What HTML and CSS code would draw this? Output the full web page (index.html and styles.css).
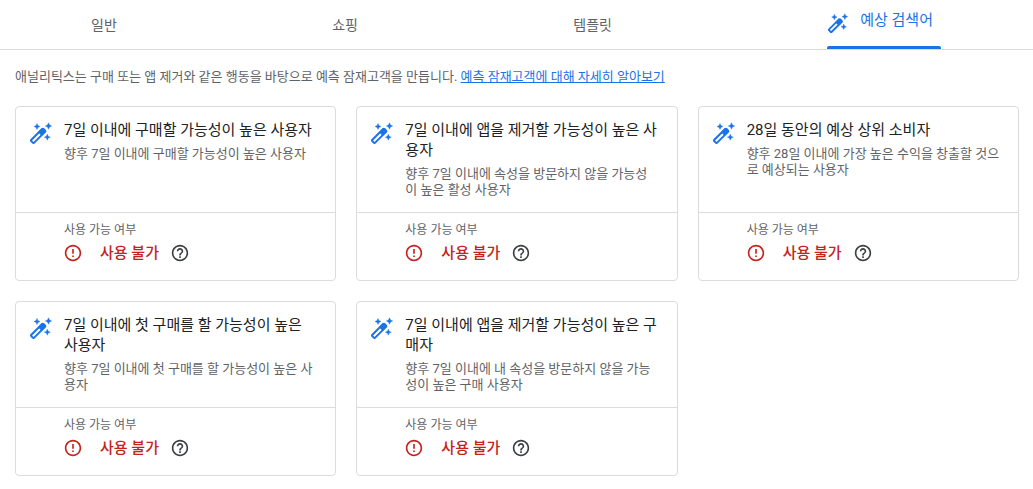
FILE: index.html
```html
<!DOCTYPE html>
<html lang="ko">
<head>
  <meta charset="utf-8" />
  <title>예상 검색어</title>
  <meta name="viewport" content="width=device-width, initial-scale=1" />
  <link rel="stylesheet" href="styles.css">
</head>
<body>
  <!-- shared icons -->
  <svg class="sprite" aria-hidden="true">
    <symbol id="wand" viewBox="0 0 22 22">
      <g transform="rotate(-45 8.300 13.700)">
        <rect x="-0.500" y="11.700" width="17.200" height="4" rx="1" fill="none" stroke="currentColor" stroke-width="2" stroke-linejoin="round" />
        <path d="M10.500 11h6v5.400h-6z" fill="currentColor" />
      </g>
      <path d="M7 1.500l.9 2.100 2.100.9-2.100.9L7 7.500l-.9-2.100-2.100-.9 2.100-.9zM18.500.8l1 2.200 2.200 1-2.200 1-1 2.200-1-2.200-2.200-1 2.200-1zM17.300 12.200l.9 2.100 2.100.9-2.100.9-.9 2.100-.9-2.100-2.100-.9 2.100-.9z" fill="currentColor" stroke="currentColor" stroke-width=".4" />
    </symbol>
    <symbol id="alert" viewBox="1 1 22 22">
      <path d="M11 15h2v2h-2zm0-8h2v6h-2zm.99-5C6.470 2 2 6.480 2 12s4.470 10 9.990 10C17.520 22 22 17.520 22 12S17.520 2 11.990 2zM12 20c-4.420 0-8-3.580-8-8s3.580-8 8-8 8 3.580 8 8-3.580 8-8 8z" fill="currentColor" />
    </symbol>
    <symbol id="help" viewBox="1 1 22 22">
      <path d="M11 18h2v-2h-2v2zm1-16C6.480 2 2 6.480 2 12s4.480 10 10 10 10-4.480 10-10S17.520 2 12 2zm0 18c-4.410 0-8-3.590-8-8s3.590-8 8-8 8 3.590 8 8-3.590 8-8 8zm0-14c-2.210 0-4 1.790-4 4h2c0-1.100.9-2 2-2s2 .9 2 2c0 2-3 1.750-3 5h2c0-2.250 3-2.500 3-5 0-2.210-1.790-4-4-4z" fill="currentColor" />
    </symbol>
  </svg>

  <nav class="tabs">
    <button class="tab" type="button">일반</button>
    <button class="tab" type="button">쇼핑</button>
    <button class="tab" type="button">템플릿</button>
    <button class="tab active" type="button">
      <svg class="tab-icon" aria-hidden="true"><use href="#wand" /></svg>
      <span class="tab-label">예상 검색어</span>
    </button>
  </nav>

  <main>
    <p class="intro">애널리틱스는 구매 또는 앱 제거와 같은 행동을 바탕으로 예측 잠재고객을 만듭니다. <a href="#">예측 잠재고객에 대해 자세히 알아보기</a></p>

    <div class="cards">
      <article class="card">
        <div class="card-body">
          <svg class="card-icon" aria-hidden="true"><use href="#wand" /></svg>
          <div class="card-text">
            <h2>7일 이내에 구매할 가능성이 높은 사용자</h2>
            <p>향후 7일 이내에 구매할 가능성이 높은 사용자</p>
          </div>
        </div>
        <div class="card-footer">
          <div class="label">사용 가능 여부</div>
          <div class="status">
            <svg class="status-icon" aria-hidden="true"><use href="#alert" /></svg>
            <span class="status-text">사용 불가</span>
            <button class="help" type="button" aria-label="도움말"><svg class="status-icon"><use href="#help" /></svg></button>
          </div>
        </div>
      </article>

      <article class="card">
        <div class="card-body">
          <svg class="card-icon" aria-hidden="true"><use href="#wand" /></svg>
          <div class="card-text">
            <h2>7일 이내에 앱을 제거할 가능성이 높은 사<br>용자</h2>
            <p>향후 7일 이내에 속성을 방문하지 않을 가능성<br>이 높은 활성 사용자</p>
          </div>
        </div>
        <div class="card-footer">
          <div class="label">사용 가능 여부</div>
          <div class="status">
            <svg class="status-icon" aria-hidden="true"><use href="#alert" /></svg>
            <span class="status-text">사용 불가</span>
            <button class="help" type="button" aria-label="도움말"><svg class="status-icon"><use href="#help" /></svg></button>
          </div>
        </div>
      </article>

      <article class="card">
        <div class="card-body">
          <svg class="card-icon" aria-hidden="true"><use href="#wand" /></svg>
          <div class="card-text">
            <h2>28일 동안의 예상 상위 소비자</h2>
            <p>향후 28일 이내에 가장 높은 수익을 창출할 것으<br>로 예상되는 사용자</p>
          </div>
        </div>
        <div class="card-footer">
          <div class="label">사용 가능 여부</div>
          <div class="status">
            <svg class="status-icon" aria-hidden="true"><use href="#alert" /></svg>
            <span class="status-text">사용 불가</span>
            <button class="help" type="button" aria-label="도움말"><svg class="status-icon"><use href="#help" /></svg></button>
          </div>
        </div>
      </article>

      <article class="card">
        <div class="card-body">
          <svg class="card-icon" aria-hidden="true"><use href="#wand" /></svg>
          <div class="card-text">
            <h2>7일 이내에 첫 구매를 할 가능성이 높은<br>사용자</h2>
            <p>향후 7일 이내에 첫 구매를 할 가능성이 높은 사<br>용자</p>
          </div>
        </div>
        <div class="card-footer">
          <div class="label">사용 가능 여부</div>
          <div class="status">
            <svg class="status-icon" aria-hidden="true"><use href="#alert" /></svg>
            <span class="status-text">사용 불가</span>
            <button class="help" type="button" aria-label="도움말"><svg class="status-icon"><use href="#help" /></svg></button>
          </div>
        </div>
      </article>

      <article class="card">
        <div class="card-body">
          <svg class="card-icon" aria-hidden="true"><use href="#wand" /></svg>
          <div class="card-text">
            <h2>7일 이내에 앱을 제거할 가능성이 높은 구<br>매자</h2>
            <p>향후 7일 이내에 내 속성을 방문하지 않을 가능<br>성이 높은 구매 사용자</p>
          </div>
        </div>
        <div class="card-footer">
          <div class="label">사용 가능 여부</div>
          <div class="status">
            <svg class="status-icon" aria-hidden="true"><use href="#alert" /></svg>
            <span class="status-text">사용 불가</span>
            <button class="help" type="button" aria-label="도움말"><svg class="status-icon"><use href="#help" /></svg></button>
          </div>
        </div>
      </article>
    </div>
  </main>
</body>
</html>
```

FILE: styles.css
```css
* {
  box-sizing: border-box;
}

body {
  font-family: Roboto, "Noto Sans CJK KR", sans-serif;
  margin: 0;
  background: #fff;
  color: #5f6368;
}

button {
  font: inherit;
  color: inherit;
  background: none;
  border: 0;
  padding: 0;
  cursor: pointer;
}

.sprite {
  display: none;
}

.tabs {
  display: flex;
  justify-content: space-between;
  height: 50px;
  padding: 0 92px 0 91px;
  border-bottom: 1px solid #dadce0;
}

.tab {
  display: flex;
  align-items: center;
  font-size: 14px;
  line-height: 20px;
}

.tab.active {
  position: relative;
  align-items: flex-start;
  gap: 12px;
  padding: 10px 8px 0 1px;
  color: #1a73e8;
}

.tab.active::after {
  content: "";
  position: absolute;
  left: 0;
  right: 0;
  bottom: 0;
  height: 3px;
  border-radius: 2px 2px 0 0;
  background: #1a73e8;
}

.tab-label {
  font-size: 15px;
}

.tab-icon {
  width: 20px;
  height: 20px;
  margin-top: 3px;
}

main {
  padding: 17px 14px 13px 15px;
}

.intro {
  margin: 0 0 19px;
  font-size: 13px;
  line-height: 20px;
}

.intro a {
  color: #1a73e8;
}

.cards {
  display: grid;
  grid-template-columns: repeat(3, 1fr);
  gap: 20px;
}

.card {
  display: flex;
  flex-direction: column;
  border: 1px solid #dadce0;
  border-radius: 4px;
}

.card-body {
  display: flex;
  flex: 1;
  gap: 12px;
  min-height: 105px;
  padding: 13px 12px 14px 14px;
}

.card-icon {
  flex: none;
  width: 22px;
  height: 22px;
  margin-top: 2px;
  color: #1a73e8;
}

.card-text {
  flex: 1;
}

.card h2 {
  margin: 0 0 6px;
  font-size: 15px;
  font-weight: 400;
  line-height: 20px;
  color: #202124;
}

.card p {
  margin: 0;
  font-size: 13px;
  line-height: 16px;
}

.card-footer {
  padding: 9px 12px 17px 48px;
  border-top: 1px solid #dadce0;
}

.label {
  margin-bottom: 5px;
  font-size: 12px;
  line-height: 16px;
}

.status {
  display: flex;
  align-items: center;
  color: #c5221f;
}

.status-icon {
  display: block;
  width: 18px;
  height: 18px;
}

.status-text {
  margin: 0 12px 0 18px;
  font-size: 15px;
  font-weight: 500;
  line-height: 20px;
}

.help {
  color: #3c4043;
}
```
